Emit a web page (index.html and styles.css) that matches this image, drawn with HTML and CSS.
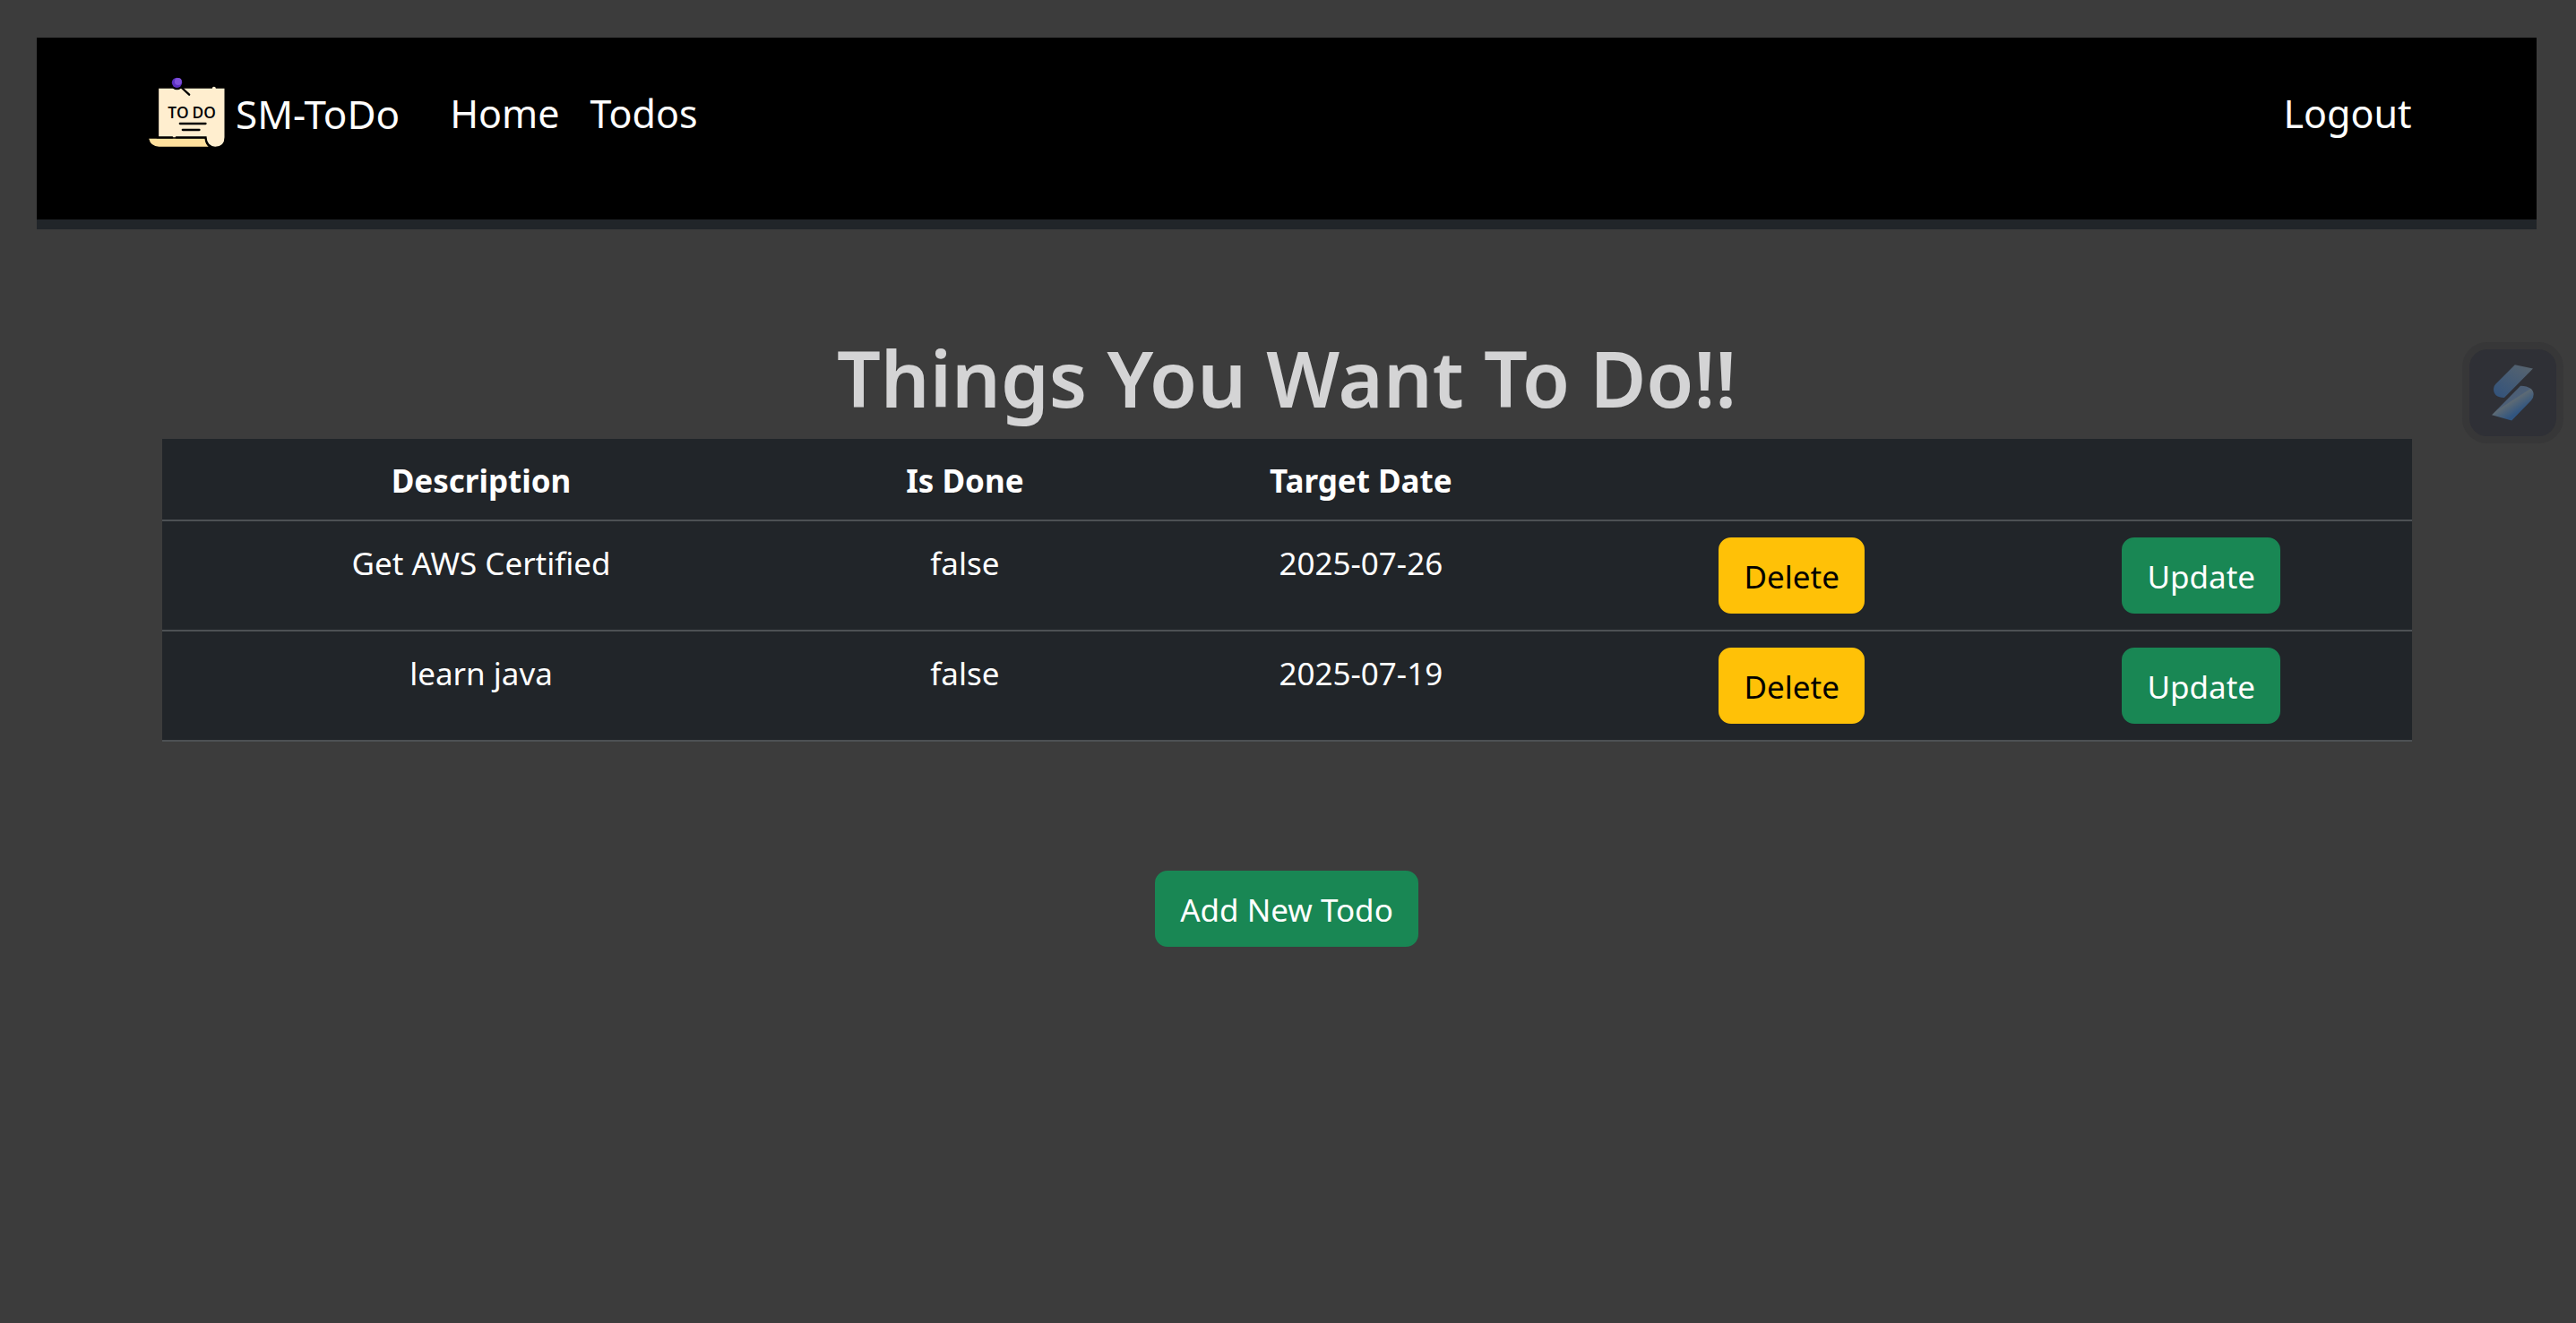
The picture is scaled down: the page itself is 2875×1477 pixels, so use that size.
FILE: index.html
```html
<!DOCTYPE html>
<html lang="en">
<head>
  <meta charset="utf-8">
  <meta name="viewport" content="width=device-width, initial-scale=1">
  <title>SM-ToDo</title>
  <link rel="stylesheet" href="styles.css">
</head>
<body>
  <header class="site-header">
    <nav class="navbar">
      <a class="brand" href="#">
        <svg class="brand-logo" viewBox="48 48 254 234" aria-hidden="true">
          <path fill="#ffeecf" d="M81 86H301V250Q301 281 270 281Q246 281 238 250H81Z"/>
          <circle cx="266" cy="86" r="6" fill="#ffeecf"/>
          <path fill="#ffe09d" d="M48 254H236Q238 272 248 281H82Q54 280 48 254Z"/>
          <g fill="none" stroke="#000" stroke-width="7" stroke-linecap="round">
            <path d="M76 250H126M140 250H238Q240 274 254 281"/>
            <path d="M152 204H238M161 225H217"/>
            <path d="M158 84L183 107"/>
          </g>
          <circle cx="142" cy="72" r="19"/>
          <circle cx="142" cy="67" r="17" fill="#5a2fc0"/>
          <circle cx="146" cy="63" r="12" fill="#7e50d8"/>
          <text class="logo-text" x="111" y="185">TO</text>
          <text class="logo-text" x="193" y="185">DO</text>
        </svg>
        <span class="nav-label">SM-ToDo</span>
      </a>
      <ul class="nav-list">
        <li><a class="nav-label" href="#">Home</a></li>
        <li><a class="nav-label" href="#">Todos</a></li>
      </ul>
      <a class="nav-label" href="#">Logout</a>
    </nav>
  </header>

  <main class="container">
    <h1 class="title">Things You Want To Do!!</h1>
    <table class="todo-table">
      <colgroup>
        <col class="col-description">
        <col class="col-done">
        <col class="col-date">
        <col class="col-delete">
        <col class="col-update">
      </colgroup>
      <thead>
        <tr><th>Description</th><th>Is Done</th><th>Target Date</th><th></th><th></th></tr>
      </thead>
      <tbody>
        <tr>
          <td>Get AWS Certified</td><td>false</td><td>2025-07-26</td>
          <td class="action"><button class="btn btn-warning" type="button">Delete</button></td>
          <td class="action"><button class="btn btn-success" type="button">Update</button></td>
        </tr>
        <tr>
          <td>learn java</td><td>false</td><td>2025-07-19</td>
          <td class="action"><button class="btn btn-warning" type="button">Delete</button></td>
          <td class="action"><button class="btn btn-success" type="button">Update</button></td>
        </tr>
      </tbody>
    </table>
    <button class="btn btn-success" type="button">Add New Todo</button>
  </main>

  <button class="assistant" type="button" aria-label="Assistant">
    <svg class="assistant-icon" viewBox="153 111 142 189" aria-hidden="true">
      <defs>
        <linearGradient id="upper" x1="0" y1="1" x2="0.8" y2="0">
          <stop offset="0" stop-color="#31527c"/>
          <stop offset="1" stop-color="#56636f"/>
        </linearGradient>
        <linearGradient id="lower" x1="0.3" y1="0.3" x2="0.65" y2="0.75">
          <stop offset="0" stop-color="#4b5d74"/>
          <stop offset="0.35" stop-color="#4d6078"/>
          <stop offset="0.4" stop-color="#5d6a74"/>
          <stop offset="1" stop-color="#315580"/>
        </linearGradient>
      </defs>
      <path fill="url(#upper)" d="M231 111L292 124L195 222Q159 222 159 192Q159 183 166 176Z"/>
      <path fill="url(#lower)" d="M250 182Q294 184 294 211Q294 223 286 231L220 299L153 280Z"/>
    </svg>
  </button>
</body>
</html>
```
FILE: styles.css
```css
*, *::before, *::after {
  box-sizing: border-box;
}

body {
  margin: 42px 44px 42px 41px;
  background: #3c3c3c;
  color: #fff;
  font-family: "Noto Sans", "Open Sans", sans-serif;
  font-size: 35px;
  line-height: 54px;
}

a {
  color: inherit;
  text-decoration: none;
}

.site-header {
  background: #000;
  border-bottom: 11px solid #212529;
}

.navbar {
  display: flex;
  align-items: center;
  padding: 44px 5% 81px 125px;
  font-size: 43px;
  line-height: 68px;
}

.nav-label {
  display: block;
  padding-top: 4px;
}

.brand {
  display: flex;
  align-items: center;
  gap: 12px;
  margin-right: 56px;
  font-size: 44px;
}

.brand-logo {
  width: 85px;
  height: 78px;
}

.logo-text {
  font-family: "Open Sans", sans-serif;
  font-size: 52px;
  font-weight: 600;
}

.nav-list {
  display: flex;
  gap: 34px;
  margin: 0 auto 0 0;
  padding: 0;
  list-style: none;
}

.container {
  width: 90%;
  margin: 0 auto;
  padding-top: 112px;
  text-align: center;
}

.title {
  margin: 0 0 14px;
  color: #d4d4d5;
  font-size: 86px;
  font-weight: 600;
  line-height: 108px;
}

.todo-table {
  width: 100%;
  margin-bottom: 144px;
  border-collapse: separate;
  border-spacing: 0;
  table-layout: fixed;
  background: #212529;
}

.col-description { width: 28.4%; }
.col-done { width: 14.6%; }
.col-date { width: 20.6%; }
.col-delete { width: 17.7%; }
.col-update { width: 18.7%; }

.todo-table th,
.todo-table td {
  padding: 20px 18px 16px;
  border-bottom: 2px solid #4d5154;
  vertical-align: top;
}

.todo-table .action {
  padding: 18px;
}

.btn {
  display: inline-block;
  padding: 15px 26px 12px;
  border: 2px solid transparent;
  border-radius: 14px;
  font: inherit;
  vertical-align: top;
  cursor: pointer;
}

.btn-warning {
  background: #ffc107;
  border-color: #ffc107;
  color: #000;
}

.btn-success {
  background: #198754;
  border-color: #198754;
  color: #fff;
}

.assistant {
  position: fixed;
  top: 382px;
  right: 14px;
  display: grid;
  place-items: center;
  width: 113px;
  height: 113px;
  padding: 0;
  border: 8px solid #373738;
  border-radius: 28px;
  background: #2f3036;
}

.assistant-icon {
  width: 47px;
  height: 63px;
}
```
